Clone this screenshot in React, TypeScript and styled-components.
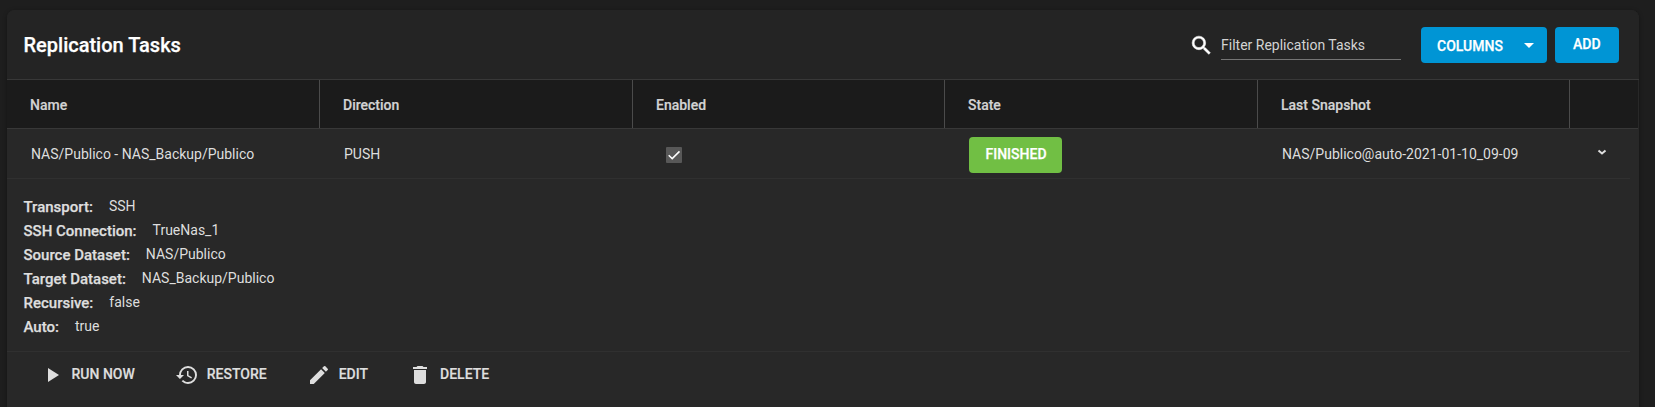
import React from "react";
import styled, { createGlobalStyle } from "styled-components";

const GlobalStyle = createGlobalStyle`
  * { box-sizing: border-box; }
  body {
    margin: 0;
    background: #1e1e1e;
    color: #dedede;
    font: 400 14px/20px Roboto, sans-serif;
    overflow: hidden;
  }
`;

const Page = styled.main`
  height: 407px;
  padding: 10px 16px 0 7px;
  overflow: hidden;
`;

const Card = styled.section`
  height: 420px;
  background: #282828;
  border-radius: 8px 8px 0 0;
  box-shadow: 0 1px 4px rgba(0, 0, 0, 0.35);
`;

const Toolbar = styled.header`
  display: flex;
  height: 70px;
  padding: 17px 20px 0 16.5px;
  background: #242424;
  border-bottom: 1px solid #383838;
  border-radius: 8px 8px 0 0;
`;

const Title = styled.h1`
  flex: 1;
  margin: 0;
  padding-top: 6px;
  color: #fff;
  font-size: 20px;
  font-weight: 500;
  line-height: 24px;
  -webkit-text-stroke: 0.25px currentColor;
`;

const Search = styled.label`
  display: flex;
  align-items: flex-start;
  margin-right: 20px;
`;

const SearchIcon = styled.svg`
  width: 25px;
  height: 25px;
  margin: 6px 7px 0 0;
  fill: #fff;
  stroke: #fff;
  stroke-width: 0.5;
`;

const FilterInput = styled.div`
  width: 180px;
  height: 33px;
  padding-top: 8px;
  border-bottom: 1px solid #747474;
  color: #d3d3d3;
`;

const Button = styled.button<{ $width: number; $lift?: boolean }>`
  display: flex;
  align-items: center;
  justify-content: space-between;
  width: ${(p) => p.$width}px;
  height: 36px;
  padding: ${(p) => (p.$lift ? "0 18px 2px" : "1px 6.5px 0 16px")};
  border: 0;
  border-radius: 4px;
  background: #0095d5;
  color: #fff;
  font: 500 14px/20px Roboto, sans-serif;
  -webkit-text-stroke: 0.25px currentColor;
  & + & { margin-left: 8px; }
`;

const Caret = styled.svg`
  width: 24px;
  height: 24px;
  margin-top: -2px;
  fill: currentColor;
`;

const Row = styled.div`
  display: grid;
  grid-template-columns: 313px 313px 312px 313px 312px 1fr;
`;

const HeadRow = styled(Row)`
  height: 49px;
  margin-right: 1px;
  background: #1b1b1b;
  border-bottom: 1px solid #383838;
`;

const HeadCell = styled.div`
  padding: 15px 23px 0;
  border-right: 1px solid #4b4b4b;
  color: #d3d3d3;
  font-weight: 500;
  -webkit-text-stroke: 0.2px currentColor;
  &:last-child { border-right: 0; }
`;

const BodyRow = styled(Row)`
  height: 50px;
  margin-right: 9px;
  border-bottom: 1px solid #303030;
`;

const Cell = styled.div`
  display: flex;
  align-items: center;
  padding: 0 24px;
`;

const Checkbox = styled.svg`
  width: 16px;
  height: 16px;
  margin: 3px 0 0 9px;
  border-radius: 1px;
  background: #585858;
  fill: none;
  stroke: #fff;
  stroke-width: 1.5;
`;

const Badge = styled.span`
  width: 93px;
  height: 36px;
  margin-top: 3px;
  padding: 7px 0 0 1px;
  border-radius: 4px;
  background: #71bf44;
  color: #fff;
  font-weight: 500;
  text-align: center;
  -webkit-text-stroke: 0.25px currentColor;
`;

const Chevron = styled.svg`
  width: 10px;
  height: 7px;
  margin: -3px 0 0 3px;
  fill: none;
  stroke: #dedede;
  stroke-width: 2;
`;

const Details = styled.dl`
  height: 173px;
  margin: 0 9px 0 0;
  padding: 16px 0 0 16.5px;
  border-bottom: 1px solid #303030;
`;

const Detail = styled.div`
  display: flex;
  height: 24px;
`;

const Term = styled.dt`
  font-size: 15px;
  font-weight: 500;
  line-height: 24px;
  -webkit-text-stroke: 0.25px currentColor;
`;

const Value = styled.dd`
  margin: 0 0 0 16px;
  line-height: 22px;
`;

const Actions = styled.footer`
  display: flex;
  padding: 9px 0 0 32.5px;
`;

const Action = styled.button`
  display: flex;
  align-items: center;
  height: 26px;
  margin: 0 40px 0 0;
  padding: 0;
  border: 0;
  background: none;
  color: #dedede;
  font: 500 14px/20px Roboto, sans-serif;
  white-space: nowrap;
  -webkit-text-stroke: 0.2px currentColor;
`;

const ActionIcon = styled.svg`
  width: 24px;
  height: 24px;
  margin: 2px 8px 0 0;
  fill: currentColor;
`;

const headings = ["Name", "Direction", "Enabled", "State", "Last Snapshot", ""];

const details = [
  ["Transport:", "SSH"],
  ["SSH Connection:", "TrueNas_1"],
  ["Source Dataset:", "NAS/Publico"],
  ["Target Dataset:", "NAS_Backup/Publico"],
  ["Recursive:", "false"],
  ["Auto:", "true"],
];

const actions = [
  { label: "RUN NOW", path: "M8 5v14l11-7z" },
  {
    label: "RESTORE",
    path: "M13 3a9 9 0 0 0-9 9H1l3.89 3.89.07.14L9 12H6c0-3.87 3.13-7 7-7s7 3.13 7 7-3.13 7-7 7c-1.93 0-3.68-.79-4.94-2.06l-1.42 1.42A8.95 8.95 0 0 0 13 21a9 9 0 0 0 0-18zm-1 5v5l4.28 2.54.72-1.21-3.5-2.08V8H12z",
  },
  {
    label: "EDIT",
    path: "M3 17.25V21h3.75L17.81 9.94l-3.75-3.75L3 17.25zM20.71 7.04a1 1 0 0 0 0-1.41l-2.34-2.34a1 1 0 0 0-1.41 0l-1.83 1.83 3.75 3.75 1.83-1.83z",
  },
  {
    label: "DELETE",
    path: "M6 19c0 1.1.9 2 2 2h8c1.1 0 2-.9 2-2V7H6v12zM19 4h-3.5l-1-1h-5l-1 1H5v2h14V4z",
  },
];

export default function App() {
  return (
    <Page>
      <GlobalStyle />
      <Card>
        <Toolbar>
          <Title>Replication Tasks</Title>
          <Search>
            <SearchIcon viewBox="0 0 24 24">
              <path d="M15.5 14h-.79l-.28-.27A6.47 6.47 0 0 0 16 9.5 6.5 6.5 0 1 0 9.5 16c1.61 0 3.09-.59 4.23-1.57l.27.28v.79l5 4.99L20.49 19l-4.99-5zm-6 0C7.01 14 5 11.99 5 9.5S7.01 5 9.5 5 14 7.01 14 9.5 11.99 14 9.5 14z" />
            </SearchIcon>
            <FilterInput>Filter Replication Tasks</FilterInput>
          </Search>
          <Button $width={126}>
            COLUMNS
            <Caret viewBox="0 0 24 24"><path d="M7 10l5 5 5-5z" /></Caret>
          </Button>
          <Button $width={64} $lift>ADD</Button>
        </Toolbar>
        <HeadRow>
          {headings.map((h) => <HeadCell key={h}>{h}</HeadCell>)}
        </HeadRow>
        <BodyRow>
          <Cell>NAS/Publico - NAS_Backup/Publico</Cell>
          <Cell>PUSH</Cell>
          <Cell>
            <Checkbox viewBox="0 0 16 16"><path d="M2.7 8.3l3.5 3.3 7.3-7.2" /></Checkbox>
          </Cell>
          <Cell><Badge>FINISHED</Badge></Cell>
          <Cell>NAS/Publico@auto-2021-01-10_09-09</Cell>
          <Cell><Chevron viewBox="0 0 10 7"><path d="M1.5 1.5L5 4.5l3.5-3" /></Chevron></Cell>
        </BodyRow>
        <Details>
          {details.map(([term, value]) => (
            <Detail key={term}>
              <Term>{term}</Term>
              <Value>{value}</Value>
            </Detail>
          ))}
        </Details>
        <Actions>
          {actions.map((a) => (
            <Action key={a.label}>
              <ActionIcon viewBox="0 0 24 24"><path d={a.path} /></ActionIcon>
              {a.label}
            </Action>
          ))}
        </Actions>
      </Card>
    </Page>
  );
}
